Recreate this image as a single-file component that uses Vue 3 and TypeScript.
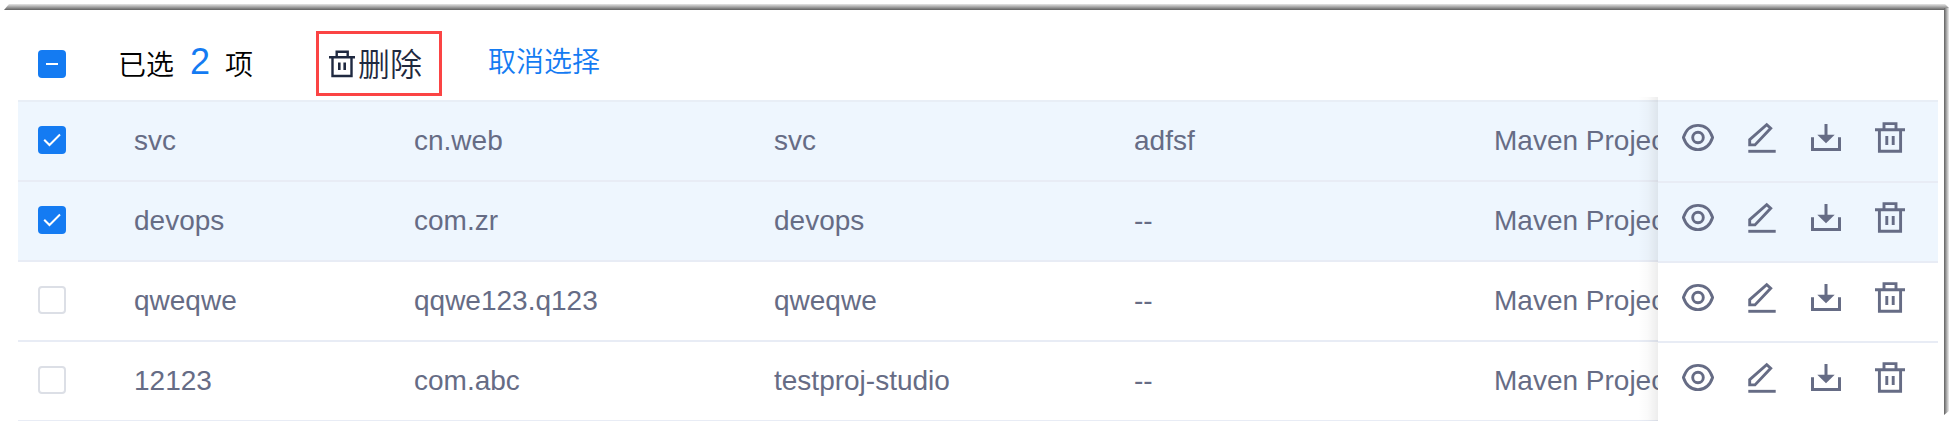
<script setup lang="ts">
interface Row {
  name: string
  group: string
  artifact: string
  desc: string
  type: string
  checked: boolean
}

const rows: Row[] = [
  { name: 'svc', group: 'cn.web', artifact: 'svc', desc: 'adfsf', type: 'Maven Project', checked: true },
  { name: 'devops', group: 'com.zr', artifact: 'devops', desc: '--', type: 'Maven Project', checked: true },
  { name: 'qweqwe', group: 'qqwe123.q123', artifact: 'qweqwe', desc: '--', type: 'Maven Project', checked: false },
  { name: '12123', group: 'com.abc', artifact: 'testproj-studio', desc: '--', type: 'Maven Project', checked: false },
]
const selectedCount = rows.filter((r) => r.checked).length
</script>

<template>
  <div class="page">
    <div class="edge-top"></div>
    <div class="edge-right"></div>
    <header class="toolbar">
      <span class="box on">
        <svg width="28" height="28" viewBox="0 0 28 28"><path d="M8 14H20" stroke="#fff" stroke-width="2" /></svg>
      </span>
      <span class="summary"><span>已选</span><b class="count">{{ selectedCount }}</b><span>项</span></span>
      <button class="delete">
        <svg class="delete-icon" width="26" height="28" viewBox="0 0 26 28" fill="none" stroke="#1f2940" stroke-width="2.400">
          <path d="M0 7.200H26M3.500 7.200V26H22.500V7.200M7.700 6.500V1.700H18.700V6.500" />
          <path d="M10.300 12.500V20M15.700 12.500V20" stroke-width="2.600" />
        </svg>
        <span class="delete-label">删除</span>
      </button>
      <a class="cancel">取消选择</a>
    </header>
    <main class="table">
      <section class="body">
        <div v-for="row in rows" :key="row.name" class="row" :class="{ selected: row.checked }">
          <span class="check-cell">
            <span class="box" :class="{ on: row.checked }">
              <svg v-if="row.checked" width="28" height="28" viewBox="0 0 28 28" fill="none"><path d="M6.200 13.700L11.500 19L22 8.500" stroke="#fff" stroke-width="2" /></svg>
            </span>
          </span>
          <span class="cell">{{ row.name }}</span>
          <span class="cell">{{ row.group }}</span>
          <span class="cell">{{ row.artifact }}</span>
          <span class="cell">{{ row.desc }}</span>
          <span class="cell">{{ row.type }}</span>
        </div>
      </section>
      <div class="shade"></div>
      <aside class="actions">
        <div v-for="row in rows" :key="row.name" class="action-row" :class="{ selected: row.checked }">
          <svg width="32" height="32" viewBox="0 0 32 32" fill="none" stroke="#666c85" stroke-width="2.900">
            <path d="M1.400 15.500C4 7.800 9.500 3.400 16 3.400S28 7.800 30.600 15.500C28 23.200 22.500 27.600 16 27.600S4 23.200 1.400 15.500Z" />
            <circle cx="16" cy="15.500" r="5.300" />
          </svg>
          <svg width="32" height="32" viewBox="0 0 32 32" fill="none" stroke="#666c85" stroke-width="2.900">
            <path d="M3.700 22.900V17.600L20.700 2.600L24.700 6.300L9 22.900Z" />
            <path d="M2.300 29.300H29.700" />
          </svg>
          <svg width="32" height="32" viewBox="0 0 32 32" fill="none" stroke="#666c85" stroke-width="3">
            <path d="M2.500 15.300V27.500H29.500V15.300M16 2V16" />
            <path d="M7.300 12.700H24.700L16 21.200Z" fill="#666c85" stroke="none" />
          </svg>
          <svg width="32" height="32" viewBox="0 0 32 32" fill="none" stroke="#666c85" stroke-width="2.900">
            <path d="M1 7.800H31M5.400 7.800V29.300H26.600V7.800M10 7.300V1.600H22V7.300M12.800 14V23M19.200 14V23" />
          </svg>
        </div>
      </aside>
    </main>
  </div>
</template>

<style>
body {
  margin: 0;
  background: #fff;
}
</style>

<style scoped>
.page {
  position: relative;
  box-sizing: border-box;
  width: 1954px;
  height: 421px;
  padding: 10px 16px 0 18px;
  overflow: hidden;
  background: #fff;
  font-family: "Liberation Sans", "Noto Sans CJK SC", sans-serif;
}
.edge-top {
  position: absolute;
  left: 4px;
  top: 4px;
  width: 1945px;
  height: 6px;
  background: linear-gradient(#e6e6e6, #606060);
  clip-path: polygon(5px 0, 1941px 0, 100% 4px, 100% 100%, 0 100%);
}
.edge-right {
  position: absolute;
  left: 1944px;
  top: 8px;
  width: 5px;
  height: 407px;
  background: linear-gradient(90deg, #606060, #eee);
  clip-path: polygon(0 0, 100% 0, 100% 403px, 0 100%);
}
.toolbar {
  display: flex;
  align-items: flex-start;
  height: 90px;
}
.box {
  display: block;
  box-sizing: border-box;
  flex: none;
  width: 28px;
  height: 28px;
  border: 2px solid #dcdfe6;
  border-radius: 4px;
  background: #fff;
}
.box.on {
  border: 0;
  background: #147bf2;
}
.box svg {
  display: block;
}
.toolbar .box {
  margin: 40px 0 0 20px;
}
.summary {
  display: flex;
  align-items: flex-start;
  margin: 34px 0 0 52px;
  width: 198px;
  font-size: 28px;
  line-height: 44px;
  color: #000;
  font-weight: 350;
}
.count {
  margin: -4px 15px 0 16px;
  font-size: 36px;
  font-weight: 400;
  color: #147bf2;
}
.delete {
  display: flex;
  box-sizing: border-box;
  width: 126px;
  height: 65px;
  margin: 21px 0 0;
  padding: 0 0 0 10px;
  align-items: center;
  border: 3px solid #fb4444;
  background: #fff;
  font: 350 32px/58px "Liberation Sans", "Noto Sans CJK SC", sans-serif;
  color: #1f2940;
}
.delete-icon {
  flex: none;
  margin-right: 3px;
}
.delete-label {
  padding-top: 2px;
}
.cancel {
  margin: 31px 0 0 46px;
  font-size: 28px;
  line-height: 44px;
  font-weight: 350;
  color: #147bf2;
}
.table {
  position: relative;
  display: flex;
  height: 321px;
}
.body {
  box-sizing: border-box;
  width: 1640px;
  height: 321px;
  overflow: hidden;
  border-top: 2px solid #e8eef6;
}
.row {
  display: grid;
  grid-template-columns: 116px 280px 360px 360px 360px 360px;
  align-items: center;
  box-sizing: border-box;
  height: 80px;
  border-bottom: 2px solid #e8ecf5;
  font-size: 28px;
  line-height: 40px;
  color: #666c85;
}
.selected {
  background: #eef6fe;
}
.check-cell {
  padding: 0 0 2px 20px;
}
.cell {
  white-space: nowrap;
}
.shade {
  position: absolute;
  top: -3px;
  left: 1620px;
  bottom: 0;
  width: 20px;
  background: linear-gradient(90deg, rgba(0, 0, 0, 0), rgba(0, 0, 0, 0.02) 50%, rgba(0, 0, 0, 0.07));
}
.actions {
  box-sizing: border-box;
  width: 280px;
  height: 321px;
  overflow: hidden;
  border-top: 2px solid #e8eef6;
}
.action-row {
  display: flex;
  align-items: flex-start;
  gap: 32px;
  box-sizing: border-box;
  height: 80px;
  padding: 19px 0 0 24px;
  border-bottom: 2px solid #e8ecf5;
}
.action-row:first-child {
  height: 81px;
  padding-top: 20px;
}
</style>
